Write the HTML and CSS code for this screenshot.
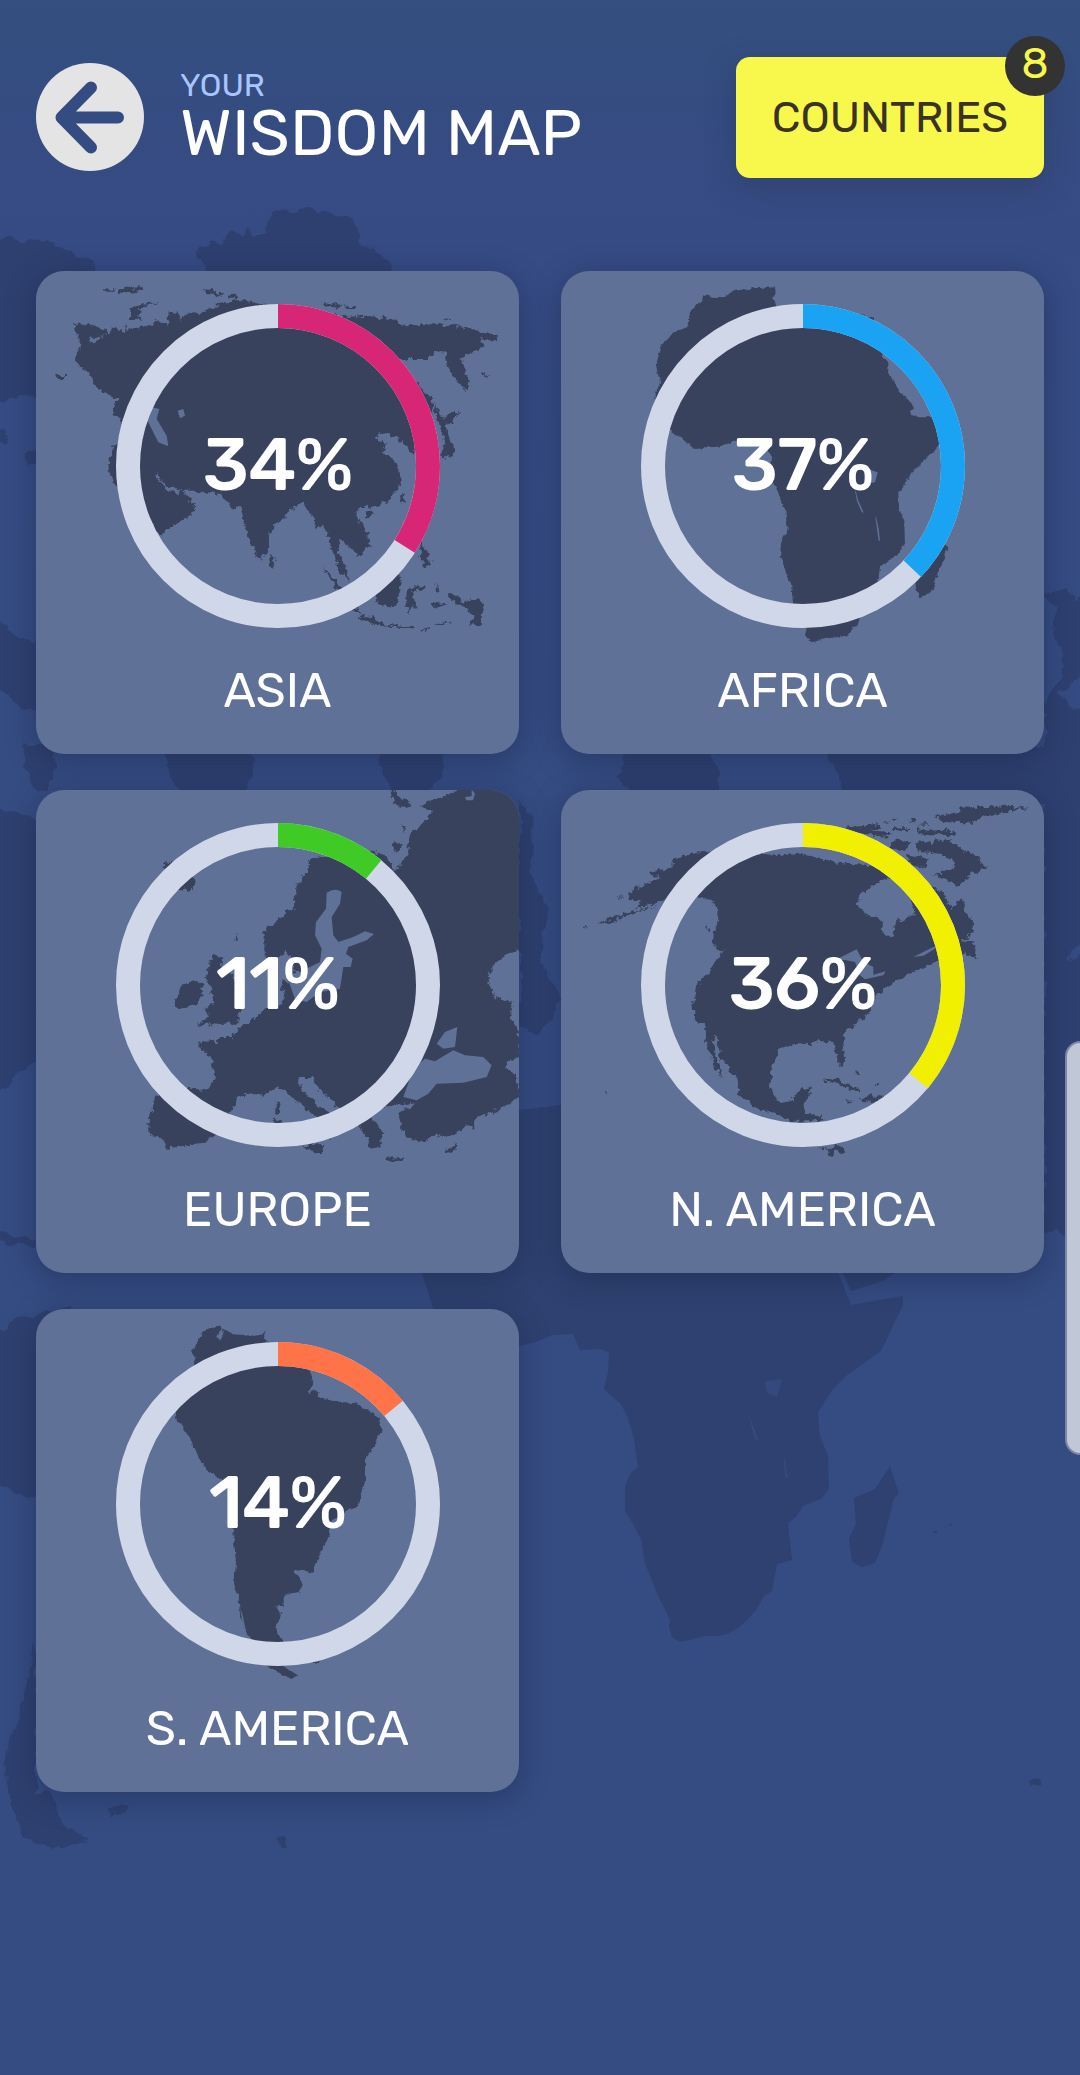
FILE: index.html
```html
<!DOCTYPE html>
<html lang="en">
<head>
  <meta charset="UTF-8" />
  <title>Your Wisdom Map</title>
  <meta name="viewport" content="width=device-width, initial-scale=1" />
  <link rel="stylesheet" href="styles.css">
</head>
<body>
  <!-- faded world map behind everything -->
  <svg class="world" viewBox="0 0 1080 2075" aria-hidden="true">
    <defs>
      <filter id="shore" x="-5%" y="-5%" width="110%" height="110%">
        <feTurbulence type="fractalNoise" baseFrequency="0.07" numOctaves="3" seed="4" result="n" />
        <feDisplacementMap in="SourceGraphic" in2="n" scale="12" xChannelSelector="R" yChannelSelector="G" />
      </filter>
      <filter id="coast" x="-5%" y="-5%" width="110%" height="110%">
        <feTurbulence type="fractalNoise" baseFrequency="0.06" numOctaves="3" seed="9" result="n" />
        <feDisplacementMap in="SourceGraphic" in2="n" scale="24" xChannelSelector="R" yChannelSelector="G" />
      </filter>
      <filter id="coast-soft" x="-5%" y="-5%" width="110%" height="110%">
        <feTurbulence type="fractalNoise" baseFrequency="0.05" numOctaves="3" seed="2" result="n" />
        <feDisplacementMap in="SourceGraphic" in2="n" scale="14" xChannelSelector="R" yChannelSelector="G" />
      </filter>
    </defs>
    <g filter="url(#shore)">
      <path d="M197 257L205 246 213 240 222 243 233 232 244 236 250 228 256 236 265 236 263 224 273 213 290 211 310 208 325 211 340 218 350 220 357 228 358 238 363 247 375 250 387 263 400 290H200l8-16z" />
      <path d="M-20 243L20 240 47 241 58 248 70 252 80 256 92 262 92 290 36 400 20 392 8 402-20 408Z" />
      <path d="M24 456l6-6 10 0 0 12-12 2zM-20 425l24 6 6 10-30 4zM-20 618l26 8 16 14 18 0v70l-20-2-14-14-26-8z" />
      <path d="M-20 812l34-2 26 14v240l-22 8-10 16-28 6z" />
      <path d="M-20 1234l24-2 12 6 24 0 0 8-30-2z" />
      <path d="M168 745h88l-4 30-8 18-24 6-40-6-12-22zM378 745h66l-2 30-12 18-36 2-12-26zM24 745h30l2 24-8 26-14-8-8-20z" />
      <path d="M628 745h76l14 20 4 30h-92l-10-20zM822 745h270v52l-70 10H850z" />
      <path d="M519 800l14 20-4 50 20 40-10 50 22 40-22 34-20-8z" />
      <path d="M1044 596l12 10-2 32 10 12-4 26-16 30v526l12-2 10 12 12 30h30V945l-26 4-16 14 8-16 34-14V700l-34 8-14-14 26-22 20-4v-78l-32 10-8-12z" />
      <path d="M-20 1332l26-4 14-10 22-6 30-6v180l-38 14-54-20z" />
      <path d="M36 1641l-8 36-11 45-10 25-2 28 4 24 15 37 20 9 16 4 27-7-14-10-14-18-8-22V1792h-15z" />
      <path d="M108 1808l12-6 9 4-5 8-14 2zM275 1836l11 4-1 6-4 0zM1029 1780l9-2 4 8-10 2z" />
    </g>
    <!-- africa -->
    <path d="M422 1273L400 1180 440 1120 561 1105 838 1273 851 1305 903 1296 903 1305 881 1351 847 1375 832 1390 822 1406 818 1412 820 1436 828 1456 829 1489 821 1499 803 1506 797 1516 788 1523 792 1560 777 1564 772 1591 764 1596 756 1610 747 1620 738 1628 727 1634 717 1636 703 1636 690 1640 680 1642 672 1637 669 1627 670 1620 656 1591 645 1563 641 1539 632 1522 625 1511 625 1487 630 1474 638 1467 634 1439 628 1418 621 1404 609 1394 604 1389 608 1372 609 1352 600 1349 580 1350 573 1334 552 1335 536 1342 519 1346 440 1330Z" />
    <path d="M843 1273h52l-12 8-32 10zM890 1466l9 28-5 4-12 48-7 17-13 4-10-5-3-23 7-15-2-26 21-9z" />
    <path d="M932 1532l5-2 0 3zM948 1525l4-2-1 3z" />
    <path class="lake" d="M765 1381l17-2-5 18-10-4zM747 1411l12 30-4-2zM783 1450l5 28-3-1z" />
  </svg>

  <div class="screen">
    <header class="header">
      <button class="back" aria-label="Back">
        <svg viewBox="0 0 108 108"><path d="M82 54.5H25.5M55 24.5L25.5 54.5 55 84.5" /></svg>
      </button>
      <h1 class="heading">
        <span class="heading-small">YOUR</span>
        <span class="heading-main">WISDOM MAP</span>
      </h1>
      <button class="countries">
        <span class="countries-text">COUNTRIES</span>
        <span class="badge">8</span>
      </button>
    </header>

    <main class="grid">
      <section class="card asia">
        <svg class="map" viewBox="48 46 1449 1449">
          <g class="land">
            <path d="M160 205L185 203 225 212 255 222 262 238 240 245 212 243 208 262 225 255 270 235 280 212 290 228 315 226 318 208 328 222 355 215 375 208 395 210 410 195 445 205 448 170 475 175 488 200 485 178 540 175 600 145 650 132 740 145 780 160 900 165 960 185 1040 180 1130 192 1145 208 1200 205 1290 208 1350 220 1430 240 1432 258 1380 250 1395 275 1350 290 1325 310 1345 370 1340 410 1310 375 1280 330 1275 290 1240 290 1230 310 1140 310 1130 330 1170 355 1200 390 1235 430 1240 470 1215 500 1200 560 1175 600 1160 570 1130 545 1090 530 1065 548 1100 560 1090 590 1125 615 1142 655 1135 700 1100 740 1060 755 1040 750 1010 765 1010 790 1045 830 1048 870 1015 903 985 870 955 850 955 890 975 930 992 980 965 955 935 890 925 830 905 810 890 820 880 785 850 740 820 755 805 775 750 820 745 870 725 915 710 900 680 830 660 750 640 765 600 715 520 705 490 705 440 690 408 652 410 665 450 710 475 712 488 700 500 720 527 745 515 775 470 805 420 838 395 800 340 740 285 690 262 640 280 570 330 560 310 500 275 470 295 430 240 405 225 385 210 350 175 335 165 310 185 275Z" />
            <path d="M418 137L365 145 330 165 330 190 370 195 350 175 375 152ZM248 101l40 0-4 6-34 1zM294 104l40-12 6 4 30-2 2 8-40 6-38 4zM548 100l30 4 34 12-4 5-50-6zM620 116l34 4-4 8-30-4zM905 143l60 4-8 9-50-6zM975 150l34 2-4 6-28-2zM1265 185l30 2-10 6zM105 358l34 0-8 12-20 0z" />
            <path d="M752 893l14 25-8 20-12-10zM1035 768l20-4-8 26-12-4zM1145 715l12-6-4 34-10-8zM1240 440l25 45 55-20-20 35-25 10 30 70-6 20-12-2-25 8 13-45-25-80zM1205 855l10 25 20 45-20 10-15-35zM1378 350l26 10-4 6z" />
            <path d="M908 940l32 25 70 75 10 35-35-20-35-55zM1015 1080l45 5 40 23 90 4-10 8-90-8-60-15zM1065 1010l35-30 25-30 20 25-10 55-10 25-55-10zM1160 1000l55-10-5 10-35 10 20 55-20-15-10 25-7-35zM1285 1015l30 5 15 25 25-15 32 8-2 74-35-7 15-20-40-35-35-20zM1235 1045l45-2-2 8-40 2zM1246 980l12 30-10 2zM1200 1125l30-10-15 14zM1240 1108l50-12-20 14z" />
          </g>
          <path class="sea" d="M395 455L418 460 410 490 440 540 445 572 415 560 395 520 380 490ZM473 465L490 460 495 480 480 488Z" />
        </svg>
        <svg class="ring" viewBox="0 0 324 324">
          <circle class="track" cx="162" cy="162" r="150" />
          <circle class="value" cx="162" cy="162" r="150" pathLength="100" stroke-dasharray="34 66" />
        </svg>
        <div class="percent">34%</div>
        <div class="name">ASIA</div>
      </section>

      <section class="card africa">
        <svg class="map" viewBox="48 46 1449 1449">
          <g class="land soft">
            <path d="M485 115L500 123 535 125 570 105 620 98 690 95 692 115 685 125 695 150 740 160 770 190 830 210 860 180 900 170 985 185 1000 250 1010 295 1030 320 1030 355 1060 400 1110 455 1095 470 1115 485 1165 485 1200 500 1185 565 1110 640 1060 710 1062 760 1078 795 1080 870 1055 895 1005 935 1000 975 960 1060 940 1100 905 1140 850 1148 800 1160 780 1140 785 1115 745 1050 738 985 705 905 708 860 728 820 720 760 695 700 675 665 678 600 665 575 630 560 570 555 525 572 448 580 400 540 375 520 340 470 328 425 345 380 332 325 355 260 385 232 430 210 435 170Z" />
            <path d="M1200 868L1207 880 1160 1010 1130 1024 1112 1010 1112 970 1150 900Z" />
          </g>
          <path class="sea" d="M975 642l23 8-8 30-12 2zM932 705l8 30 16 36-6-2-14-32-6-32zM993 783l8 36 4 36-4 0-6-42-4-28zM1095 465l14-6 4 18-14 2z" />
        </svg>
        <svg class="ring" viewBox="0 0 324 324">
          <circle class="track" cx="162" cy="162" r="150" />
          <circle class="value" cx="162" cy="162" r="150" pathLength="100" stroke-dasharray="37 63" />
        </svg>
        <div class="percent">37%</div>
        <div class="name">AFRICA</div>
      </section>

      <section class="card europe">
        <svg class="map" viewBox="48 44 1449 1449">
          <g class="land">
            <path d="M1205 150L1235 110 1205 92 1225 80 1290 60 1345 20 1520 20 1520 520 1470 530 1430 560 1405 605 1415 650 1440 672 1480 675 1470 730 1497 765 1500 845 1455 860 1465 885 1490 900 1500 965 1420 1010 1360 1035 1360 1065 1345 1050 1300 1075 1275 1085 1245 1078 1215 1100 1165 1090 1145 1060 1135 1010 1180 985 1120 990 1060 1000 1050 1020 1090 1070 1080 1115 1050 1120 1040 1090 1010 1040 940 985 900 945 875 905 835 905 845 945 890 985 950 1030 935 1060 925 1090 915 1050 870 1010 825 975 785 935 755 940 730 965 690 955 650 965 640 1005 600 1030 590 1075 555 1105 500 1110 440 1120 430 1090 385 1080 385 1040 410 960 430 945 520 940 565 945 585 895 575 850 535 810 540 798 590 800 600 785 640 785 660 755 715 720 740 700 790 690 785 620 830 590 800 530 770 550 735 540 730 470 800 410 820 400 830 330 860 290 875 245 970 245 1040 230 1100 240 1125 285 1140 270 1165 230 1170 170Z" />
            <path d="M1110 40l25 20 40 30-20 6-35-12zM1145 155l10-2-2 20zM1115 205l28-5-4 25-12 8z" />
            <path d="M580 540l25 0-5 30 40 30 10 60 10 40-10 45-60 0-60 7 40-32-20-20 35-20-15-20 5-20-20-40zM480 635l40-20 30 10-5 35-15 30-50 10-20-10 15-30zM425 272l20-12 80 50 0 30-45 5zM642 485l10-5-6 22z" />
            <path d="M845 1113l65-8-5 33-35-12zM768 980l14 5-7 30-10 0zM755 1030l30 5-5 45-20 0zM1095 1145l60 3-8 8-50 0zM1280 1122l34-20-8 22-20 8z" />
          </g>
          <path class="sea" d="M920 352Q945 335 965 350L960 385 935 425 940 480 955 500 1000 485 1035 468 1062 476 1040 495 985 515 978 535 998 550 992 575 970 575 960 640 900 650 860 680 825 672 800 600 840 590 900 560 905 520 885 480 888 440 918 400ZM795 535l20 40-10 50-22-20z" />
          <path class="sea" d="M1150 965L1190 975 1225 955 1250 925 1330 922 1400 905 1415 870 1390 845 1335 840 1300 825 1245 858 1215 850 1180 880ZM1250 805L1275 770 1312 755 1305 815 1270 820ZM1145 992l40-8-15 18zM1335 65l20-2 0-20 10 12-6 20-20 0z" />
        </svg>
        <svg class="ring" viewBox="0 0 324 324">
          <circle class="track" cx="162" cy="162" r="150" />
          <circle class="value" cx="162" cy="162" r="150" pathLength="100" stroke-dasharray="11 89" />
        </svg>
        <div class="percent">11%</div>
        <div class="name">EUROPE</div>
      </section>

      <section class="card north">
        <svg class="map" viewBox="48 44 1449 1449">
          <g class="land">
            <path d="M510 225L440 235 380 255 385 275 315 290 320 302 345 305 250 350 255 375 290 375 270 395 300 395 370 370 440 365 490 370 520 400 520 430 510 470 500 500 525 530 540 520 505 570 460 625 445 680 450 735 480 750 485 810 510 875 530 905 520 860 500 800 510 775 530 850 575 910 580 960 640 1000 700 1020 740 1040 835 1035 830 1020 780 1015 775 990 803 935 765 940 740 975 705 980 675 940 680 870 705 820 750 805 790 810 820 797 865 800 880 865 890 872 900 850 893 780 965 720 990 670 1020 640 1080 600 1130 580 1170 560 1200 550 1250 545 1255 520 1290 520 1285 495 1250 500 1290 465 1280 435 1255 400 1250 368 1220 400 1190 350 1150 330 1100 380 1110 420 1050 440 1045 480 1025 485 1010 460 1015 435 965 415 935 390 945 355 1000 320 1050 300 1000 270 900 265 840 255 770 235 700 240 640 235 570 215Z" />
            <path d="M1110 205l30-12 20 10 40-13 50 30 50 25 20 30-30 20-20-5 0 20-35 25-35-25-40-10 60-15 10-25-40-25-70-5zM1165 125l75-15 0-12 80-6 130 5-90 18-50 10-30 20-80-5zM1110 160l50 8 20-6 55 8-5 12-50-6-50 2zM1050 190l50 10-20 30-50-5zM890 158l60-6 50-8 4 16-30 4 70 8-20 12-90-8zM1080 235l70 15-10 25-50-10zM1050 155l50 6-10 8-40-4zM1085 130l30 4-10 8zM1115 150l30-4 10 6zM1010 140l20-6 4 8zM1040 132l12-4-4 10z" />
            <path d="M160 440l70-22 110-28-90 32-70 20zM118 453l10-2-2 6zM180 946l6 2-4 6zM220 365l16 2-10 4zM480 455l10-8 2 20zM1255 515l40 5-2 18-30 6zM1290 545l8 0-2 8z" />
            <path d="M835 915l35-8 80 40-30 0-45-25zM945 975l25-17 50 8-35 16zM903 976l22 4-14 5zM928 885l10 2 0 12-8-4zM988 922l12 2-6 6zM820 1110l30 15 30-15 22 20-12 8-15-13-13 17z" />
          </g>
          <path class="sea" d="M875 552L935 522 955 560 985 575 985 598 1022 588 1015 600 960 612 945 600 930 560 905 555ZM1105 545l60-30 20-4-50 30zM1135 595l40-28 10 6zM1062 412l10 0 0 10-8 0z" />
        </svg>
        <svg class="ring" viewBox="0 0 324 324">
          <circle class="track" cx="162" cy="162" r="150" />
          <circle class="value" cx="162" cy="162" r="150" pathLength="100" stroke-dasharray="36 64" />
        </svg>
        <div class="percent">36%</div>
        <div class="name">N. AMERICA</div>
      </section>

      <section class="card south">
        <svg class="map" viewBox="48 42 1449 1449">
          <g class="land soft">
            <path d="M600 88L605 100 592 125 602 138 610 125 606 98 640 118 700 122 735 118 740 140 800 170 865 215 880 260 865 290 900 310 955 320 1010 325 1075 365 1085 405 1065 450 1035 490 1035 560 1015 635 975 650 930 680 925 730 905 765 880 830 820 825 848 865 840 890 790 900 792 932 765 935 785 965 765 990 770 1020 790 1035 780 1080 720 1090 690 1030 680 1015 660 960 655 900 642 870 648 800 638 700 640 600 600 550 550 515 510 430 468 370 475 330 525 230 518 165 550 110 580 98Z" />
            <path d="M735 1108l55 5 45 32-25 7-30-17zM875 1100l30-4-20 10zM875 285l24 4-6 16-22 2zM728 112l8-4-2 16zM782 950l6 4-4 6z" />
          </g>
          <path class="sea" d="M660 940l8 20 12 60-6-4z" />
        </svg>
        <svg class="ring" viewBox="0 0 324 324">
          <circle class="track" cx="162" cy="162" r="150" />
          <circle class="value" cx="162" cy="162" r="150" pathLength="100" stroke-dasharray="14 86" />
        </svg>
        <div class="percent">14%</div>
        <div class="name">S. AMERICA</div>
      </section>
    </main>
  </div>

  <div class="edge-handle"></div>
</body>
</html>
```
FILE: styles.css
```css
* {
  box-sizing: border-box;
}
body {
  margin: 0;
  position: relative;
  min-height: 2075px;
  overflow-x: hidden;
  background: linear-gradient(#34507f 0, #354c81 100px, #364b84 220px, #354c82 700px);
  font-family: Rubik, Roboto, sans-serif;
  color: #fff;
}
button {
  border: 0;
  padding: 0;
  font: inherit;
}
.world {
  position: absolute;
  top: 0;
  left: 0;
  width: 1080px;
  height: 2075px;
  fill: #2e4170;
}
.world .lake {
  fill: #344a7e;
}
.screen {
  position: relative;
  padding: 57px 36px 0;
}

/* header */
.header {
  display: flex;
  align-items: flex-start;
  height: 214px;
}
.back {
  width: 108px;
  height: 108px;
  margin-top: 6px;
  border-radius: 50%;
  background: #e4e4e4;
}
.back svg {
  display: block;
  fill: none;
  stroke: #354c82;
  stroke-width: 12;
  stroke-linecap: round;
  stroke-linejoin: round;
}
.heading {
  margin: 10px 0 0 36px;
  font-weight: 400;
}
.heading-small,
.heading-main {
  display: block;
  white-space: nowrap;
}
.heading-small {
  font-size: 32px;
  line-height: 36px;
  color: #a9c5ff;
}
.heading-main {
  font-size: 64.8px;
  line-height: 60px;
}
.countries {
  position: relative;
  width: 308px;
  height: 121px;
  margin-left: auto;
  border-radius: 14px;
  background: #f8f74c;
  color: #3a3226;
  font-size: 43.2px;
  box-shadow: 0 8px 30px rgba(40, 50, 70, 0.35);
}
.badge {
  position: absolute;
  top: -21px;
  right: -21px;
  width: 60px;
  height: 60px;
  border-radius: 50%;
  background: #333;
  color: #f8f74c;
  line-height: 56px;
  text-align: center;
}

/* continents */
.grid {
  display: grid;
  grid-template-columns: 483px 483px;
  gap: 36px 42px;
}
.card {
  position: relative;
  display: flex;
  flex-direction: column;
  align-items: center;
  height: 483px;
  padding-top: 33px;
  border-radius: 28px;
  background: #5f7197;
  box-shadow: 0 6px 30px rgba(20, 30, 60, 0.4);
  overflow: hidden;
}
.map {
  position: absolute;
  top: 0;
  left: 0;
  width: 483px;
  height: 483px;
}
.land {
  fill: #38435c;
  filter: url(#coast);
}
.land.soft {
  filter: url(#coast-soft);
}
.sea {
  fill: #5f7197;
}
.ring {
  position: relative;
  width: 324px;
  height: 324px;
  fill: none;
  stroke-width: 24;
  transform: rotate(-90deg);
}
.track {
  stroke: #d0d7e8;
}
.asia .value { stroke: #d62675; }
.africa .value { stroke: #1ba3f3; }
.europe .value { stroke: #40ca25; }
.north .value { stroke: #f0f000; }
.south .value { stroke: #ff7349; }
.percent {
  position: absolute;
  top: 151px;
  width: 100%;
  text-align: center;
  font-size: 74px;
  line-height: 86px;
  font-weight: 500;
  letter-spacing: -1px;
}
.name {
  position: relative;
  margin-top: 35px;
  font-size: 48.6px;
  line-height: 56px;
}

/* side panel pull tab */
.edge-handle {
  position: absolute;
  top: 1041px;
  right: -16px;
  width: 31px;
  height: 414px;
  border: 2px solid #7c87a5;
  border-radius: 16px;
  background: #c0c8d8;
}
```
